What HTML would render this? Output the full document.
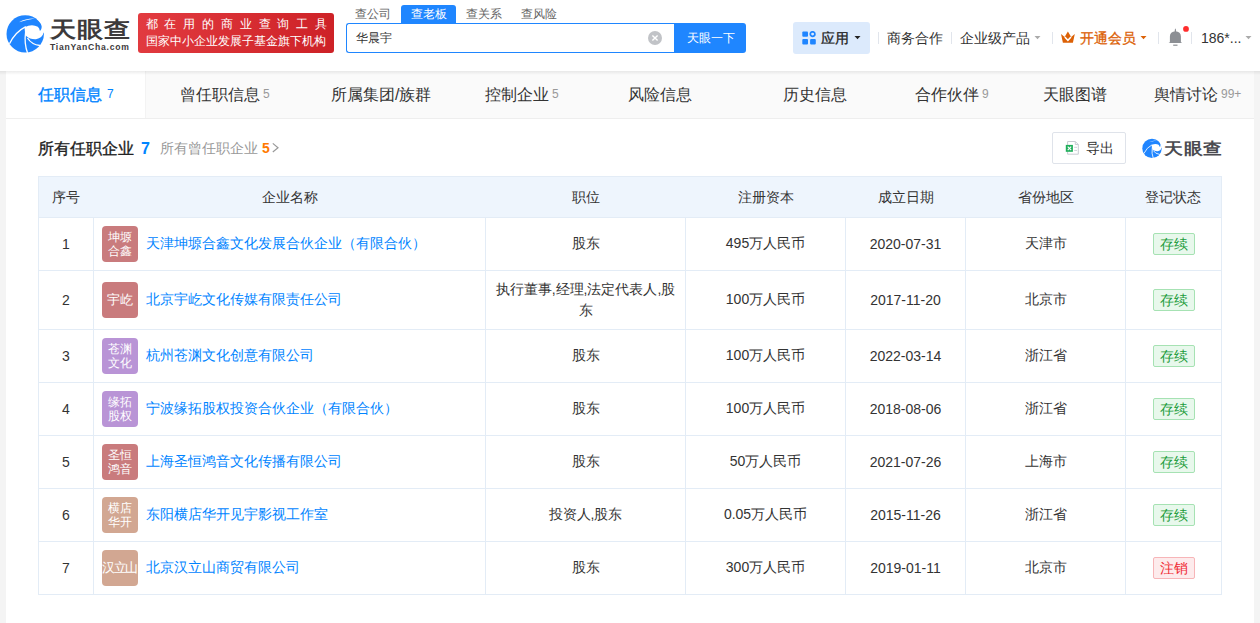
<!DOCTYPE html>
<html><head><meta charset="utf-8">
<style>
*{box-sizing:border-box;margin:0;padding:0}
html,body{width:1260px;height:623px;overflow:hidden}
body{background:#f4f4f4;font-family:"Liberation Sans",sans-serif;color:#333;position:relative}
.abs{position:absolute;white-space:nowrap}
#hdr{position:absolute;left:0;top:0;width:1260px;height:71px;background:#fff}
.banner{position:absolute;left:138px;top:13px;width:196px;height:39.5px;border-radius:3px;background:linear-gradient(100deg,#e23b40,#cd2126);color:#fff}
.stab{position:absolute;top:5px;height:18px;font-size:12px;line-height:18px;color:#666;text-align:center}
.stab.on{background:#1f86ff;color:#fff;border-radius:3px 3px 0 0}
.search{position:absolute;left:346px;top:23px;width:329px;height:30px;border:1px solid #1f86ff;border-right:none;border-radius:3px 0 0 3px;background:#fff}
.sbtn{position:absolute;left:674px;top:23px;width:72px;height:30px;background:#1f86ff;border-radius:0 3px 3px 0;color:#fff;font-size:12px;line-height:30px;text-align:center;padding-left:1px}
.nav{position:absolute;top:28px;font-size:14px;line-height:20px;color:#333}
.sep{position:absolute;top:32px;width:1px;height:12px;background:#e1e5ec}
#card{position:absolute;left:6px;top:71px;width:1248px;height:560px;background:#fff}
#tabs{position:absolute;left:6px;top:71px;width:1248px;height:48px;background:#fafafa;border-bottom:1px solid #eee}
.tab{position:absolute;top:84.5px;font-size:16px;line-height:20px;color:#333}
.tab i{font-style:normal;font-size:12px;color:#999;margin-left:3px;position:relative;top:-2px}
table{position:absolute;left:38px;top:176px;border-collapse:collapse;font-size:14px;color:#333}
th{background:#eef5fd;font-weight:normal;height:41px;border-top:1px solid #e3ecf6;border-bottom:1px solid #e3ecf6;padding-top:2px}
th:first-child{border-left:1px solid #e3ecf6}th:last-child{border-right:1px solid #e3ecf6}
td{border:1px solid #e3ecf6;text-align:center;height:53px;padding:0}
.badge{display:inline-block;width:36px;height:36px;border-radius:4px;color:#fff;font-size:12px;line-height:14px;text-align:center;vertical-align:middle;padding-top:4px}
.badge.one{line-height:36px;padding-top:0;font-size:13px}
.cname{display:inline-block;vertical-align:middle;color:#0084ff;margin-left:8px}
td.n{text-align:left;padding-left:8px}
.st{display:inline-block;width:42px;height:22px;line-height:20px;font-size:14px;border:1px solid #a6e2b3;background:#e8f8ec;color:#1b9c3b;border-radius:2px}
.st.red{border-color:#f7b5b8;background:#fdebec;color:#ef2a33}
</style></head><body>
<div id="hdr">
  <svg class="abs" style="left:4px;top:12px" width="44" height="44" viewBox="0 0 44 44">
    <circle cx="21.2" cy="21.9" r="18.7" fill="#1f85ff"/>
    <path d="M15 10.2 Q22 6.2 31 6.6 Q23 7.6 15 10.2Z" fill="#fff"/>
    <path d="M20.5 15.2 Q28 11.5 33.8 14.8 Q35.6 16.4 35.8 18.8 L41 18.8 L41 20.5 Q39.5 20.2 39.5 20.8 Q38.5 26 32 27.2 Q26 27.5 22.2 24 Q20.5 20 20.5 15.2Z" fill="#fff"/><path d="M33.2 7.3 Q37.8 10.8 37.7 15 Q37.6 17.8 36.2 18.9 L44 19 L44 0 L33.2 0Z" fill="#fff"/>
    <path d="M5.5 31.8 Q11 20 21.8 14.6" stroke="#fff" stroke-width="1.3" fill="none"/>
    <path d="M21.6 20 Q20 32 23.6 41" stroke="#fff" stroke-width="1.3" fill="none"/>
    <path d="M23.5 26 Q27.5 32.5 36 33.5" stroke="#fff" stroke-width="1.3" fill="none"/>
  </svg>
  <div class="abs" style="left:49.5px;top:11.5px;font-size:26px;line-height:30px;color:#3d3a3b;font-weight:bold;letter-spacing:1.1px;transform:scaleY(0.84);transform-origin:0 100%">天眼查</div>
  <div class="abs" style="left:50px;top:42px;font-size:8.6px;line-height:10px;color:#3d3a3b;font-weight:bold;letter-spacing:0.75px">TianYanCha.com</div>
  <div class="banner">
    <div class="abs" style="left:7.5px;top:3.2px;font-size:12px;line-height:16px;letter-spacing:6.85px">都在用的商业查询工具</div>
    <div class="abs" style="left:7.5px;top:20px;font-size:12.25px;line-height:16px">国家中小企业发展子基金旗下机构</div>
  </div>
  <div class="stab" style="left:349px;width:48px">查公司</div>
  <div class="stab on" style="left:401px;width:55px">查老板</div>
  <div class="stab" style="left:459.5px;width:48px">查关系</div>
  <div class="stab" style="left:513px;width:52px">查风险</div>
  <div class="search">
    <div class="abs" style="left:9px;top:5px;font-size:12px;line-height:18px;color:#333">华晨宇</div>
    <svg class="abs" style="left:301px;top:7px" width="14" height="14" viewBox="0 0 14 14"><circle cx="7" cy="7" r="7" fill="#c1c3c7"/><path d="M4.4 4.4L9.6 9.6M9.6 4.4L4.4 9.6" stroke="#fff" stroke-width="1.4"/></svg>
  </div>
  <div class="sbtn">天眼一下</div>
  <div class="abs" style="left:793px;top:22px;width:77px;height:32px;background:#dceafc;border-radius:3px"></div>
  <svg class="abs" style="left:802px;top:31px" width="15" height="15" viewBox="0 0 15 15">
    <rect x="0.3" y="0.4" width="5.7" height="5.4" rx="1" fill="#1f85ff"/>
    <circle cx="10.6" cy="3.1" r="2.3" fill="none" stroke="#1f85ff" stroke-width="1.7"/>
    <rect x="0.3" y="8" width="5.7" height="5.6" rx="1" fill="#1f85ff"/>
    <rect x="8.1" y="8" width="5.7" height="5.6" rx="1" fill="#1f85ff"/>
  </svg>
  <div class="nav" style="left:821px;color:#222;-webkit-text-stroke:0.3px #222">应用</div>
  <svg class="abs" style="left:854px;top:36px" width="7" height="4" viewBox="0 0 7 4"><path d="M0.5 0H6.5L3.5 3.2Z" fill="#222"/></svg>
  <div class="sep" style="left:878px"></div>
  <div class="nav" style="left:887px">商务合作</div>
  <div class="sep" style="left:951px"></div>
  <div class="nav" style="left:960px">企业级产品</div>
  <svg class="abs" style="left:1034px;top:36px" width="7" height="4" viewBox="0 0 7 4"><path d="M0.5 0H6.5L3.5 3.2Z" fill="#aaa"/></svg>
  <div class="sep" style="left:1052px"></div>
  <svg class="abs" style="left:1060px;top:30px" width="16" height="14" viewBox="0 0 16 14">
    <path d="M1 4.1L4.6 6.9L7.9 1.4L11.2 6.9L14.8 4.1L12.9 12.8H2.9Z" fill="#dc6106"/>
    <path d="M4.8 7L7.9 10.3L11 7" fill="none" stroke="#fff" stroke-width="1.5"/>
  </svg>
  <div class="nav" style="left:1080px;color:#dc6106;-webkit-text-stroke:0.3px #dc6106">开通会员</div>
  <svg class="abs" style="left:1140px;top:36px" width="7" height="4" viewBox="0 0 7 4"><path d="M0.5 0H6.5L3.5 3.2Z" fill="#dc6106"/></svg>
  <div class="sep" style="left:1158px"></div>
  <svg class="abs" style="left:1166px;top:26px" width="24" height="22" viewBox="0 0 24 22">
    <path d="M8.5 6 L9 2.9 Q9.4 2 9.8 2.9 L10.3 6Z" fill="#8c8f94"/>
    <path d="M3.9 16.4 V10.5 Q4 5.4 9.4 5.4 Q14.8 5.4 14.9 10.5 V16.4 H15.9 V17 H2.9 V16.4Z" fill="#8c8f94"/>
    <rect x="7.2" y="18.6" width="4.3" height="1.2" fill="#8c8f94"/>
    <circle cx="20" cy="2.9" r="2.9" fill="#ff2d2d"/>
  </svg>
  <div class="sep" style="left:1191px"></div>
  <div class="nav" style="left:1201px">186*...</div>
  <svg class="abs" style="left:1245px;top:36px" width="7" height="4" viewBox="0 0 7 4"><path d="M0.5 0H6.5L3.5 3.2Z" fill="#aaa"/></svg>
</div>
<div id="card"></div>
<div id="tabs">
  <div class="abs" style="left:0;top:0;width:140px;height:47px;background:#fff;border-right:1px solid #f3f3f3"></div>
</div>
<div class="tab" style="left:38px;color:#0084ff;-webkit-text-stroke:0.35px #0084ff">任职信息<i style="color:#0084ff;-webkit-text-stroke:0;margin-left:5px">7</i></div>
<div class="tab" style="left:180px">曾任职信息<i>5</i></div>
<div class="tab" style="left:331px">所属集团/族群</div>
<div class="tab" style="left:485px">控制企业<i>5</i></div>
<div class="tab" style="left:628px">风险信息</div>
<div class="tab" style="left:783px">历史信息</div>
<div class="tab" style="left:915px">合作伙伴<i>9</i></div>
<div class="tab" style="left:1043px">天眼图谱</div>
<div class="tab" style="left:1154px">舆情讨论<i>99+</i></div>

<div class="abs" style="left:0;top:71px;width:1260px;height:4px;background:linear-gradient(rgba(0,0,0,0.075),rgba(0,0,0,0))"></div>
<div class="abs" style="left:38px;top:139px;font-size:16px;line-height:20px;color:#222;-webkit-text-stroke:0.35px #222">所有任职企业<span style="color:#0084ff;font-weight:bold;-webkit-text-stroke:0;margin-left:7px">7</span></div>
<div class="abs" style="left:160px;top:139px;font-size:14px;line-height:18px;color:#999">所有曾任职企业 <b style="color:#ff7a00">5</b></div>
<svg class="abs" style="left:271px;top:142px" width="9" height="12" viewBox="0 0 9 12"><path d="M1.8 1.4L7 5.7L1.8 10" fill="none" stroke="#999" stroke-width="1.2"/></svg>
<div class="abs" style="left:1052px;top:132px;width:74px;height:32px;border:1px solid #dfe3ea;border-radius:2px"></div>
<svg class="abs" style="left:1060px;top:136px" width="24" height="24" viewBox="0 0 24 24">
  <path d="M7.6 5.5H15.3L18.3 8.5V18.2H7.6Z" fill="#fff" stroke="#c8cbd2" stroke-width="1"/>
  <path d="M15.3 5.5V8.5H18.3" fill="none" stroke="#c8cbd2" stroke-width="1"/>
  <rect x="14.2" y="10.8" width="2.8" height="1" fill="#cfd2d8"/>
  <rect x="14.2" y="13.9" width="2.8" height="1" fill="#cfd2d8"/>
  <rect x="5.8" y="8.9" width="7.1" height="6.9" fill="#1fae5a"/>
  <path d="M7.7 10.6L11.2 14.1M11.2 10.6L7.7 14.1" stroke="#fff" stroke-width="1.1"/>
</svg>
<div class="abs" style="left:1086px;top:139px;font-size:14px;line-height:18px;color:#333">导出</div>
<svg class="abs" style="left:1141px;top:136.7px" width="22.9" height="22.9" viewBox="0 0 44 44">
  <circle cx="21.2" cy="21.9" r="18.7" fill="#1f85ff"/>
  <path d="M15 10.2 Q22 6.2 31 6.6 Q23 7.6 15 10.2Z" fill="#fff"/>
  <path d="M20.5 15.2 Q28 11.5 33.8 14.8 Q35.6 16.4 35.8 18.8 L41 18.8 L41 20.5 Q39.5 20.2 39.5 20.8 Q38.5 26 32 27.2 Q26 27.5 22.2 24 Q20.5 20 20.5 15.2Z" fill="#fff"/><path d="M33.2 7.3 Q37.8 10.8 37.7 15 Q37.6 17.8 36.2 18.9 L44 19 L44 0 L33.2 0Z" fill="#fff"/>
  <path d="M5.5 31.8 Q11 20 21.8 14.6" stroke="#fff" stroke-width="1.6" fill="none"/>
  <path d="M21.6 20 Q20 32 23.6 41" stroke="#fff" stroke-width="1.6" fill="none"/>
  <path d="M23.5 26 Q27.5 32.5 36 33.5" stroke="#fff" stroke-width="1.6" fill="none"/>
</svg>
<div class="abs" style="left:1164px;top:136px;font-size:19px;line-height:22px;color:#4b4b50;font-weight:bold;letter-spacing:0.5px;transform:scaleY(0.85);transform-origin:0 100%">天眼查</div>

<table>
<colgroup><col style="width:55px"><col style="width:392px"><col style="width:200px"><col style="width:160px"><col style="width:120px"><col style="width:160px"><col style="width:96px"></colgroup>
<tr><th>序号</th><th>企业名称</th><th>职位</th><th>注册资本</th><th>成立日期</th><th>省份地区</th><th>登记状态</th></tr>
<tr><td>1</td><td class="n"><span class="badge" style="background:#c97b7d">坤塬<br>合鑫</span><span class="cname">天津坤塬合鑫文化发展合伙企业（有限合伙）</span></td><td>股东</td><td>495万人民币</td><td>2020-07-31</td><td>天津市</td><td><span class="st">存续</span></td></tr>
<tr><td style="height:59px">2</td><td class="n"><span class="badge one" style="background:#c97b7d">宇屹</span><span class="cname">北京宇屹文化传媒有限责任公司</span></td><td style="line-height:21px">执行董事,经理,法定代表人,股<br>东</td><td>100万人民币</td><td>2017-11-20</td><td>北京市</td><td><span class="st">存续</span></td></tr>
<tr><td>3</td><td class="n"><span class="badge" style="background:#b994d6">苍渊<br>文化</span><span class="cname">杭州苍渊文化创意有限公司</span></td><td>股东</td><td>100万人民币</td><td>2022-03-14</td><td>浙江省</td><td><span class="st">存续</span></td></tr>
<tr><td>4</td><td class="n"><span class="badge" style="background:#b994d6">缘拓<br>股权</span><span class="cname">宁波缘拓股权投资合伙企业（有限合伙）</span></td><td>股东</td><td>100万人民币</td><td>2018-08-06</td><td>浙江省</td><td><span class="st">存续</span></td></tr>
<tr><td>5</td><td class="n"><span class="badge" style="background:#c97b7d">圣恒<br>鸿音</span><span class="cname">上海圣恒鸿音文化传播有限公司</span></td><td>股东</td><td>50万人民币</td><td>2021-07-26</td><td>上海市</td><td><span class="st">存续</span></td></tr>
<tr><td>6</td><td class="n"><span class="badge" style="background:#d2a792">横店<br>华开</span><span class="cname">东阳横店华开见宇影视工作室</span></td><td>投资人,股东</td><td>0.05万人民币</td><td>2015-11-26</td><td>浙江省</td><td><span class="st">存续</span></td></tr>
<tr><td>7</td><td class="n"><span class="badge one" style="background:#d2a792;letter-spacing:-1.2px;text-indent:-1px">汉立山</span><span class="cname">北京汉立山商贸有限公司</span></td><td>股东</td><td>300万人民币</td><td>2019-01-11</td><td>北京市</td><td><span class="st red">注销</span></td></tr>
</table>
</body></html>
